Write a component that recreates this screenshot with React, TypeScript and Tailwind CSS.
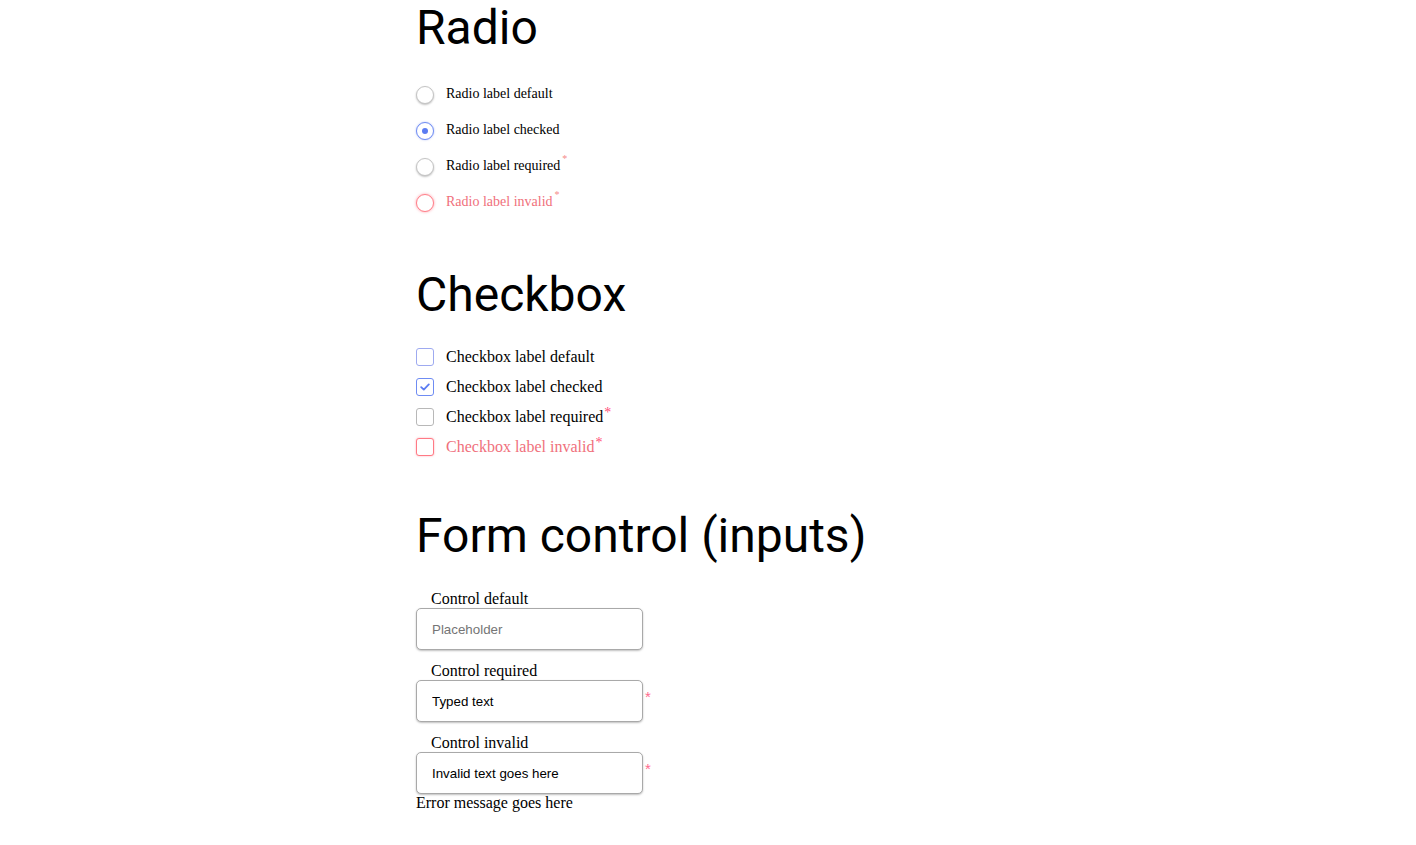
import React from "react";

const serif = "font-['Liberation_Serif','Times_New_Roman',serif]";
const sans = "font-['Liberation_Sans',Arial,sans-serif]";

type State = "default" | "checked" | "required" | "invalid";

function Radio({ state, label }: { state: State; label: string }) {
  const ring =
    state === "checked"
      ? "border-[#6f8cf3] shadow-[0_0_2px_rgba(90,120,240,0.5)]"
      : state === "invalid"
        ? "border-[#ff7f89] shadow-[0_0_3px_rgba(255,90,110,0.6)]"
        : "border-[#c4c4c4] shadow-[0_1px_2px_rgba(0,0,0,0.25)]";
  return (
    <div className="flex h-9 items-center gap-3">
      <span
        className={`flex h-[18px] w-[18px] items-center justify-center rounded-full border-[1.5px] bg-white ${ring}`}
      >
        {state === "checked" && <span className="h-[6px] w-[6px] rounded-full bg-[#5b7cf2]" />}
      </span>
      <span
        className={`${serif} relative -top-[1px] text-[14px] leading-none ${state === "invalid" ? "text-[#f0707c]" : "text-black"}`}
      >
        {label}
        {(state === "required" || state === "invalid") && (
          <span className="relative -top-[8px] ml-[2px] text-[10px] text-[#f58a8a]">*</span>
        )}
      </span>
    </div>
  );
}

function Checkbox({ state, label }: { state: State; label: string }) {
  const box =
    state === "checked"
      ? "border-[#6f8cf3]"
      : state === "invalid"
        ? "border-[#ff7a85] shadow-[0_0_2px_rgba(255,90,110,0.5)]"
        : state === "required"
          ? "border-[#b8b8b8]"
          : "border-[#9eaaf0]";
  return (
    <div className="flex h-[30px] items-center gap-3">
      <span
        className={`flex h-[18px] w-[18px] items-center justify-center rounded-[3px] border-[1.5px] bg-white ${box}`}
      >
        {state === "checked" && (
          <svg width="10" height="8" viewBox="0 0 10 8" fill="none">
            <path d="M1.2 4.2 L3.8 6.6 L8.8 1.4" stroke="#5b7cf2" strokeWidth="1.8" strokeLinecap="round" strokeLinejoin="round" />
          </svg>
        )}
      </span>
      <span
        className={`${serif} text-[16px] leading-none ${state === "invalid" ? "text-[#f0707c]" : "text-black"}`}
      >
        {label}
        {(state === "required" || state === "invalid") && (
          <span className="relative -top-[5px] ml-[1px] text-[14px] text-[#ff4f78]">*</span>
        )}
      </span>
    </div>
  );
}

function Control({
  label,
  value,
  placeholder,
  required,
  error,
}: {
  label: string;
  value?: string;
  placeholder?: string;
  required?: boolean;
  error?: string;
}) {
  return (
    <div className="mb-3 flex flex-col">
      <label className={`${serif} pl-[15px] text-[16px] leading-[18px] text-black`}>{label}</label>
      <div className="flex items-start">
        <input
          readOnly
          defaultValue={value}
          placeholder={placeholder}
          className={`${sans} h-[42px] w-[227px] rounded-[5px] border border-[#a9a9a9] bg-white px-[15px] text-[13.33px] text-black shadow-[0_1px_2px_rgba(0,0,0,0.25)] outline-none placeholder:text-[#757575]`}
        />
        {required && (
          <span className={`${sans} mt-[9px] ml-[2px] text-[15px] leading-none text-[#ff6b8e]`}>*</span>
        )}
      </div>
      {error && <span className={`${serif} -mb-3 text-[16px] leading-[18px] text-black`}>{error}</span>}
    </div>
  );
}

export default function App() {
  const heading = "font-['Roboto',sans-serif] text-[48px] font-normal leading-[56px] text-black";
  return (
    <div className="min-h-screen bg-white pl-[416px]">
      <h1 className={heading}>Radio</h1>
      <div className="mt-[21px] flex flex-col">
        <Radio state="default" label="Radio label default" />
        <Radio state="checked" label="Radio label checked" />
        <Radio state="required" label="Radio label required" />
        <Radio state="invalid" label="Radio label invalid" />
      </div>

      <h1 className={`${heading} mt-[46px]`}>Checkbox</h1>
      <div className="mt-[19px] flex flex-col">
        <Checkbox state="default" label="Checkbox label default" />
        <Checkbox state="checked" label="Checkbox label checked" />
        <Checkbox state="required" label="Checkbox label required" />
        <Checkbox state="invalid" label="Checkbox label invalid" />
      </div>

      <h1 className={`${heading} mt-[46px]`}>Form control (inputs)</h1>
      <div className="mt-[26px] flex flex-col">
        <Control label="Control default" placeholder="Placeholder" />
        <Control label="Control required" value="Typed text" required />
        <Control label="Control invalid" value="Invalid text goes here" required error="Error message goes here" />
      </div>
    </div>
  );
}
